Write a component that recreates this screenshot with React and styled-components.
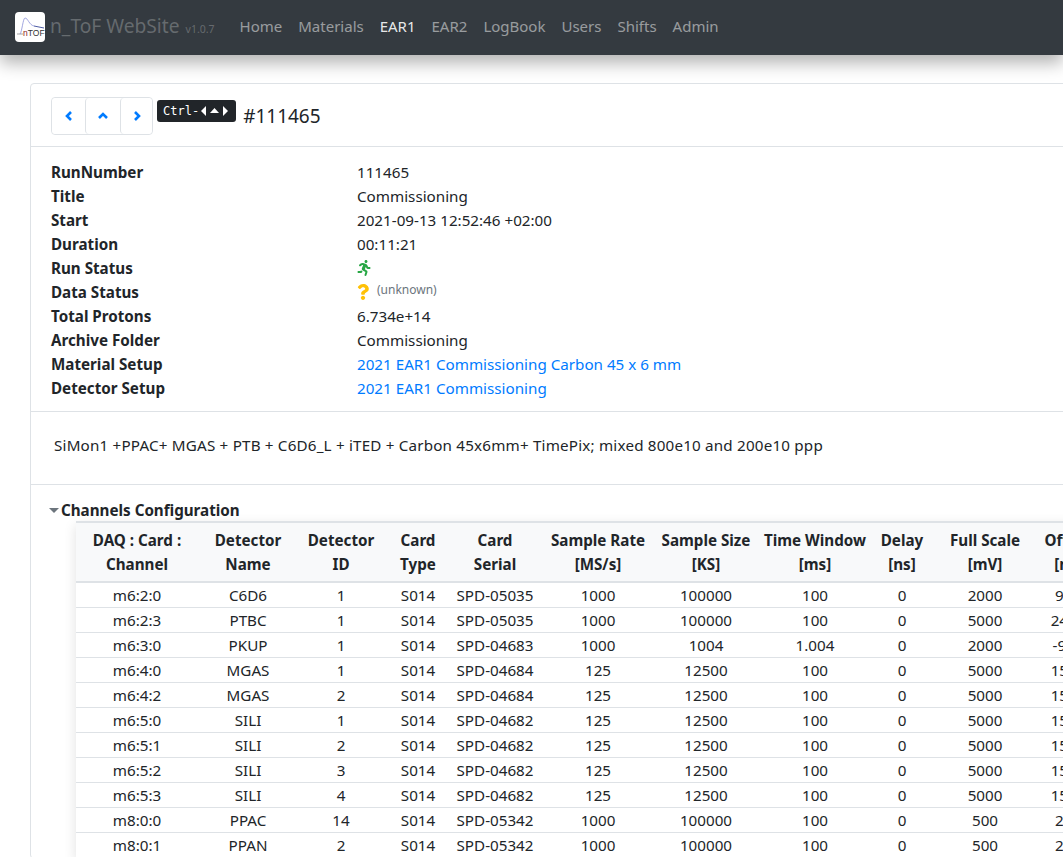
import React from 'react';
import styled, { createGlobalStyle } from 'styled-components';
import { FaRunning, FaQuestion } from 'react-icons/fa';

const GlobalStyle = createGlobalStyle`
  html, body {
    margin: 0;
    padding: 0;
    height: 857px;
    overflow: hidden;
    background: #fff;
  }
  body {
    font-family: "Noto Sans", sans-serif;
    font-size: 15.2px;
    line-height: 24px;
    color: #212529;
  }
  * { box-sizing: border-box; }
`;

const Page = styled.div`
  width: 1063px;
  height: 857px;
  overflow: hidden;
`;

const Navbar = styled.nav`
  height: 55px;
  background: #343a40;
  box-shadow: 0 8px 16px rgba(0, 0, 0, 0.3);
  display: flex;
  align-items: center;
  padding: 0 16px 1px 15px;
  position: relative;
`;

const LogoBox = styled.div`
  width: 30px;
  height: 30px;
  border-radius: 4px;
  background: #fff;
  overflow: hidden;
`;

const Brand = styled.div`
  display: flex;
  align-items: baseline;
  margin-left: 5px;
  margin-right: 17px;
  font-size: 19.2px;
  color: rgba(255, 255, 255, 0.25);
`;

const Version = styled.small`
  font-size: 10.5px;
  margin-left: 6px;
`;

const NavLink = styled.a`
  padding: 0 8px 2px;
  font-size: 15px;
  color: ${p => (p.$active ? 'rgba(255,255,255,0.9)' : 'rgba(255,255,255,0.5)')};
`;

const Content = styled.main`
  padding: 28px 0 0 30px;
`;

const Card = styled.section`
  width: 1100px;
  border: 1px solid #dee2e6;
  border-radius: 4px;
`;

const Section = styled.div`
  padding: 13px 20px 11px;
  border-bottom: 1px solid #dee2e6;
`;

const Header = styled(Section)`
  display: flex;
  align-items: flex-start;
  height: 63px;
`;

const BtnGroup = styled.div`
  display: flex;
  border: 1px solid #dee2e6;
  border-radius: 4px;
  height: 38px;
`;

const NavBtn = styled.button`
  width: ${p => p.$w}px;
  background: #fff;
  border: none;
  border-left: ${p => (p.$first ? 'none' : '1px solid #dee2e6')};
  border-radius: 4px;
  display: flex;
  align-items: center;
  justify-content: center;
  padding: 0;
`;

const Chevron = styled.svg`
  width: 12px;
  height: 12px;
  fill: none;
  stroke: #007bff;
  stroke-width: 2.6;
`;

const Kbd = styled.kbd`
  display: inline-flex;
  align-items: center;
  height: 22px;
  margin: 3px 0 0 4px;
  padding: 0 7px 0 6px;
  background: #212529;
  color: #fff;
  border-radius: 3px;
  font-family: "DejaVu Sans Mono", monospace;
  font-size: 12px;
`;

const Tri = styled.svg`
  width: 9px;
  height: 10px;
  margin-left: 1px;
  fill: #fff;
`;

const RunTitle = styled.h5`
  margin: 6px 0 0 7px;
  font-size: 19px;
  line-height: 26px;
  font-weight: 400;
`;

const InfoGrid = styled.dl`
  margin: 0;
  display: grid;
  grid-template-columns: 306px 1fr;
  grid-auto-rows: 24px;
`;

const Term = styled.dt`
  font-weight: 700;
`;

const Value = styled.dd`
  margin: 0;
  display: flex;
  align-items: center;
`;

const Link = styled.a`
  color: #007bff;
`;

const RunIcon = styled(FaRunning)`
  color: #28a745;
  margin-left: -1px;
`;

const UnknownIcon = styled(FaQuestion)`
  color: #ffc107;
  margin-left: -2px;
`;

const Muted = styled.small`
  font-size: 12px;
  color: #6c757d;
  margin-left: 6px;
  position: relative;
  top: -2px;
`;

const Comment = styled(Section)`
  height: 73px;
  padding: 21px 23px 0;
  letter-spacing: 0.19px;
`;

const Details = styled.div`
  padding: 13px 0 0 18px;
`;

const Summary = styled.div`
  display: flex;
  align-items: center;
  font-weight: 700;
  height: 24px;
`;

const Caret = styled.span`
  width: 0;
  height: 0;
  border-left: 5px solid transparent;
  border-right: 5px solid transparent;
  border-top: 5px solid #6c757d;
  margin-right: 2px;
`;

const TableWrap = styled.div`
  margin: -1px 0 0 27px;
  box-shadow: 0 4px 12px rgba(0, 0, 0, 0.12);
`;

const Table = styled.table`
  border-collapse: collapse;
  table-layout: fixed;
  width: 1018px;
  text-align: center;

  th {
    background: #f8f9fa;
    font-weight: 700;
    padding: 5px 2px 5px;
    border-top: 2px solid #dee2e6;
    border-bottom: 2px solid #dee2e6;
    vertical-align: top;
    white-space: nowrap;
  }

  td {
    padding: 0 2px;
    height: 25px;
    line-height: 24px;
    border-bottom: 1px solid #dee2e6;
    white-space: nowrap;
  }
`;

const columns = [
  { w: 122, label: ['DAQ : Card :', 'Channel'] },
  { w: 100, label: ['Detector', 'Name'] },
  { w: 86, label: ['Detector', 'ID'] },
  { w: 68, label: ['Card', 'Type'] },
  { w: 86, label: ['Card', 'Serial'] },
  { w: 120, label: ['Sample Rate', '[MS/s]'] },
  { w: 96, label: ['Sample Size', '[KS]'] },
  { w: 122, label: ['Time Window', '[ms]'] },
  { w: 52, label: ['Delay', '[ns]'] },
  { w: 114, label: ['Full Scale', '[mV]'] },
  { w: 52, label: ['Offset', '[ns]'] },
];

const rows = [
  ['m6:2:0', 'C6D6', '1', 'S014', 'SPD-05035', '1000', '100000', '100', '0', '2000', '900'],
  ['m6:2:3', 'PTBC', '1', 'S014', 'SPD-05035', '1000', '100000', '100', '0', '5000', '2400'],
  ['m6:3:0', 'PKUP', '1', 'S014', 'SPD-04683', '1000', '1004', '1.004', '0', '2000', '-900'],
  ['m6:4:0', 'MGAS', '1', 'S014', 'SPD-04684', '125', '12500', '100', '0', '5000', '1500'],
  ['m6:4:2', 'MGAS', '2', 'S014', 'SPD-04684', '125', '12500', '100', '0', '5000', '1500'],
  ['m6:5:0', 'SILI', '1', 'S014', 'SPD-04682', '125', '12500', '100', '0', '5000', '1500'],
  ['m6:5:1', 'SILI', '2', 'S014', 'SPD-04682', '125', '12500', '100', '0', '5000', '1500'],
  ['m6:5:2', 'SILI', '3', 'S014', 'SPD-04682', '125', '12500', '100', '0', '5000', '1500'],
  ['m6:5:3', 'SILI', '4', 'S014', 'SPD-04682', '125', '12500', '100', '0', '5000', '1500'],
  ['m8:0:0', 'PPAC', '14', 'S014', 'SPD-05342', '1000', '100000', '100', '0', '500', '200'],
  ['m8:0:1', 'PPAN', '2', 'S014', 'SPD-05342', '1000', '100000', '100', '0', '500', '200'],
];

const Logo = () => (
  <svg width="30" height="30" viewBox="0 0 30 30">
    <path d="M2 22 H8" stroke="#666" strokeWidth="0.6" fill="none" />
    <path d="M5 22 C7 20 8 6 10 6 C13 6 14 13 19 14" stroke="#8a90d8" strokeWidth="0.8" fill="none" />
    <path d="M19 14 L29 16" stroke="#3a4a9a" strokeWidth="0.9" fill="none" />
    <text x="8" y="24" fontSize="8.5" fontFamily="Liberation Sans, sans-serif" fill="#333">
      <tspan fill="#8a2020">n</tspan>TOF
    </text>
  </svg>
);

const App = () => (
  <Page>
    <GlobalStyle />
    <Navbar>
      <LogoBox><Logo /></LogoBox>
      <Brand>n_ToF WebSite<Version>v1.0.7</Version></Brand>
      <NavLink>Home</NavLink>
      <NavLink>Materials</NavLink>
      <NavLink $active>EAR1</NavLink>
      <NavLink>EAR2</NavLink>
      <NavLink>LogBook</NavLink>
      <NavLink>Users</NavLink>
      <NavLink>Shifts</NavLink>
      <NavLink>Admin</NavLink>
    </Navbar>
    <Content>
      <Card>
        <Header>
          <BtnGroup>
            <NavBtn $first $w={33}><Chevron viewBox="0 0 12 12"><path d="M8 2 L4 6 L8 10" /></Chevron></NavBtn>
            <NavBtn $w={35}><Chevron viewBox="0 0 12 12"><path d="M2 8 L6 4 L10 8" /></Chevron></NavBtn>
            <NavBtn $w={32}><Chevron viewBox="0 0 12 12"><path d="M4 2 L8 6 L4 10" /></Chevron></NavBtn>
          </BtnGroup>
          <Kbd>
            Ctrl-
            <Tri viewBox="0 0 9 10"><path d="M6 0 V10 L1 5 Z" /></Tri>
            <Tri viewBox="0 0 9 10"><path d="M0 7 H9 L4.5 2 Z" /></Tri>
            <Tri viewBox="0 0 9 10"><path d="M3 0 V10 L8 5 Z" /></Tri>
          </Kbd>
          <RunTitle>#111465</RunTitle>
        </Header>
        <Section>
          <InfoGrid>
            <Term>RunNumber</Term><Value>111465</Value>
            <Term>Title</Term><Value>Commissioning</Value>
            <Term>Start</Term><Value>2021-09-13 12:52:46 +02:00</Value>
            <Term>Duration</Term><Value>00:11:21</Value>
            <Term>Run Status</Term><Value><RunIcon size={16} /></Value>
            <Term>Data Status</Term><Value><UnknownIcon size={16} /><Muted>(unknown)</Muted></Value>
            <Term>Total Protons</Term><Value>6.734e+14</Value>
            <Term>Archive Folder</Term><Value>Commissioning</Value>
            <Term>Material Setup</Term><Value><Link>2021 EAR1 Commissioning Carbon 45 x 6 mm</Link></Value>
            <Term>Detector Setup</Term><Value><Link>2021 EAR1 Commissioning</Link></Value>
          </InfoGrid>
        </Section>
        <Comment>SiMon1 +PPAC+ MGAS + PTB + C6D6_L + iTED + Carbon 45x6mm+ TimePix; mixed 800e10 and 200e10 ppp</Comment>
        <Details>
          <Summary><Caret />Channels Configuration</Summary>
          <TableWrap>
            <Table>
              <colgroup>{columns.map((c, i) => <col key={i} style={{ width: c.w }} />)}</colgroup>
              <thead>
                <tr>
                  {columns.map((c, i) => <th key={i}>{c.label[0]}<br />{c.label[1]}</th>)}
                </tr>
              </thead>
              <tbody>
                {rows.map((r, i) => (
                  <tr key={i}>{r.map((v, j) => <td key={j}>{v}</td>)}</tr>
                ))}
              </tbody>
            </Table>
          </TableWrap>
        </Details>
      </Card>
    </Content>
  </Page>
);

export default App;
